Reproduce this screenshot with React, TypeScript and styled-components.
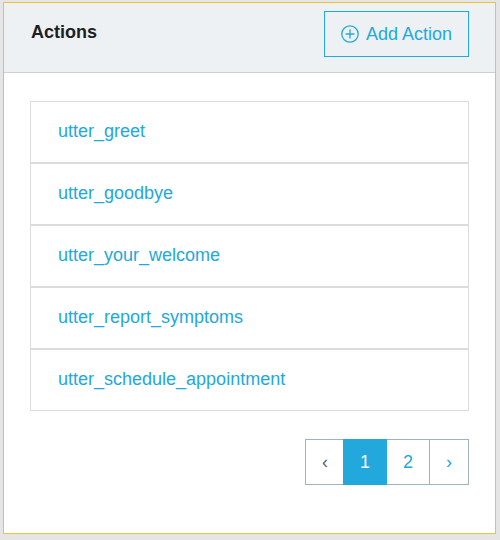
import * as React from 'react'
import styled, {createGlobalStyle, css} from 'styled-components'

const GlobalStyle = createGlobalStyle`
  html, body {
    margin: 0;
    padding: 0;
    background: #e5e5e5;
  }
  body {
    font-family: "Liberation Sans", Arial, sans-serif;
  }
`

const blue = '#22a8dc'

const Card = styled.div`
  box-sizing: border-box;
  width: 493px;
  height: 532px;
  margin: 2px 0 0 3px;
  border: 1px solid #f2c12e;
  background: #fff;
  display: flex;
  flex-direction: column;
`

const Header = styled.div`
  box-sizing: border-box;
  height: 70px;
  display: flex;
  align-items: flex-start;
  justify-content: space-between;
  padding: 8px 26px 0 27px;
  background: #eef1f4;
  border-bottom: 1px solid #c9d0d6;
`

const Title = styled.h4`
  margin: 11px 0 0;
  font-size: 18px;
  line-height: 20px;
  font-weight: 700;
  color: #1d1f22;
`

const AddButton = styled.button`
  box-sizing: border-box;
  height: 46px;
  display: flex;
  align-items: center;
  gap: 7px;
  padding: 0 16px 0 16px;
  background: transparent;
  border: 1px solid ${blue};
  color: ${blue};
  font-family: inherit;
  font-size: 18px;
  cursor: pointer;

  svg {
    display: block;
  }
`

const Body = styled.div`
  padding: 28px 26px 0 26px;
  display: flex;
  flex-direction: column;
`

const List = styled.ul`
  list-style: none;
  margin: 0;
  padding: 0;
`

const Row = styled.li`
  box-sizing: border-box;
  height: 62px;
  display: flex;
  align-items: center;
  padding: 0 0 2px 27px;
  border: 1px solid #dcdcdc;
  color: ${blue};
  font-size: 18px;
  cursor: pointer;
`

const Pager = styled.div`
  display: flex;
  justify-content: flex-end;
  margin-top: 28px;
`

const PageButton = styled.button<{active?: boolean; dim?: boolean}>`
  box-sizing: border-box;
  height: 46px;
  padding: 0 16px;
  margin-left: -1px;
  border: 1px solid #9fb2be;
  background: #fff;
  color: ${blue};
  font-family: inherit;
  font-size: 18px;
  cursor: pointer;

  ${_ =>
    _.active &&
    css`
      position: relative;
      background: ${blue};
      border-color: ${blue};
      color: #fff;
    `}
  ${_ => _.dim && 'color: #4f6478; padding: 0 15px 0 16px;'}
`

const PlusCircle = () => (
  <svg width="18" height="18" viewBox="0 0 18 18" fill="none">
    <circle cx="9" cy="9" r="8.2" stroke={blue} strokeWidth="1.3" />
    <path d="M9 4.6v8.8M4.6 9h8.8" stroke={blue} strokeWidth="1.3" />
  </svg>
)

const actions = [
  'utter_greet',
  'utter_goodbye',
  'utter_your_welcome',
  'utter_report_symptoms',
  'utter_schedule_appointment'
]

export default function App() {
  const [page, setPage] = React.useState(1)
  return (
    <>
      <GlobalStyle />
      <Card>
        <Header>
          <Title>Actions</Title>
          <AddButton>
            <PlusCircle />
            Add Action
          </AddButton>
        </Header>
        <Body>
          <List>
            {actions.map(a => (
              <Row key={a}>{a}</Row>
            ))}
          </List>
          <Pager>
            <PageButton dim onClick={() => setPage(1)}>
              ‹
            </PageButton>
            <PageButton active={page === 1} onClick={() => setPage(1)}>
              1
            </PageButton>
            <PageButton active={page === 2} onClick={() => setPage(2)}>
              2
            </PageButton>
            <PageButton onClick={() => setPage(2)}>›</PageButton>
          </Pager>
        </Body>
      </Card>
    </>
  )
}
